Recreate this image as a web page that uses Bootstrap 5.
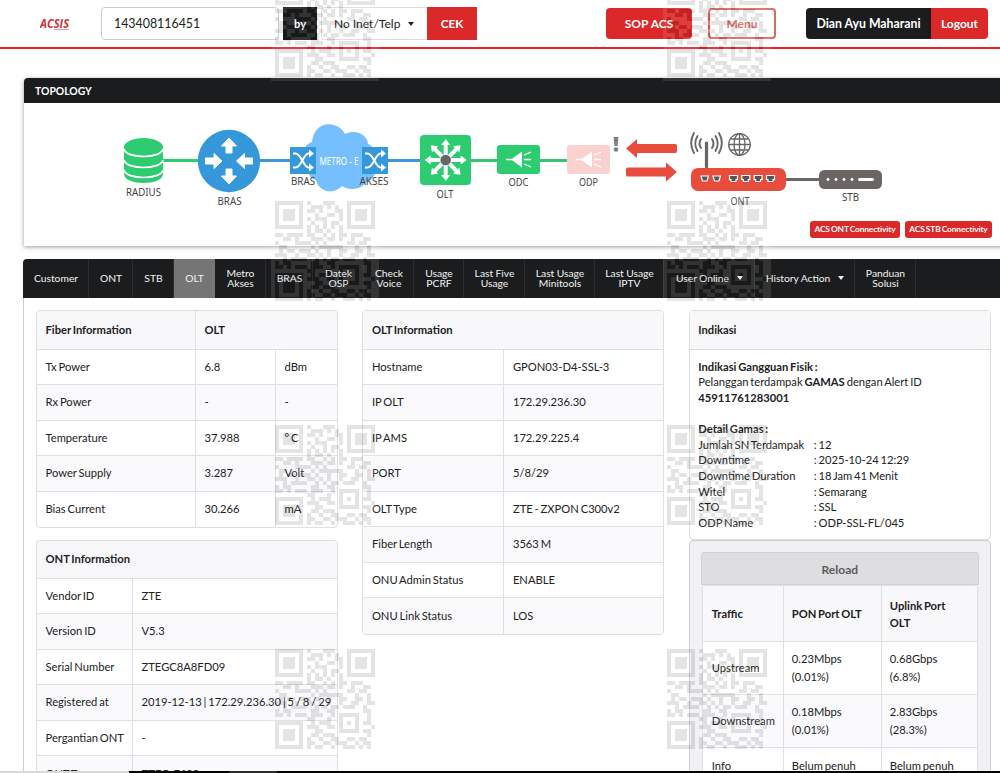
<!DOCTYPE html>
<html lang="id">
<head>
<meta charset="utf-8">
<title>ACSIS</title>
<link href="https://cdn.jsdelivr.net/npm/bootstrap@5.3.0/dist/css/bootstrap.min.css" rel="stylesheet">
<style>
:root{--red:#db2828;--ink:#1b1c1d;--line:#dededf}
body{font-family:Lato,sans-serif;font-size:11.2px;line-height:16px;color:#212121;background:#fefeff;height:773px;overflow:hidden;position:relative}
.topbar{height:49px;border-bottom:2px solid #e3242b;padding:7px 12px 0 40px;background:#fff}
.logo-box{width:61px;flex:none}
.logo-box svg{display:block}
.search-box{width:178px;height:33px;font-size:12.4px;border:1px solid #ccc;border-radius:4px;padding:0 12px;color:#222;box-shadow:none}
.by-tag{width:34px;height:33px;background:var(--ink);color:#fff;font-weight:700;margin:0 4px}
.pick{width:106px;height:33px;border:1px solid #dcdcdc;border-right:0;border-radius:4px 0 0 4px;font-size:12px;padding-left:12px}
.caret{display:inline-block;border:3px solid transparent;border-top:4px solid currentColor;border-bottom:0}
.rbtn{background:var(--red);color:#fff;font-weight:700;font-size:12px;border:0;border-radius:4px;padding:0;height:31px;line-height:31px;text-align:center;display:block}
.right-btns{padding-top:1px}
.cek{width:50px;height:33px;border-radius:0;line-height:33px;font-size:11.8px}
.menu-btn{width:68px;background:#fff;color:#e06764;border:2px solid #e06764;line-height:28px;margin:0 30px 0 16px}
.user-btn{width:125px;background:var(--ink);border-radius:4px 0 0 4px;font-size:12.3px}
.topo{margin:29px 0 0 24px;height:168px;width:990px;border-radius:4px 4px 0 0;background:#fff;box-shadow:0 1px 4px rgba(0,0,0,.38)}
.topo-head{height:25px;background:var(--ink);color:#fff;font-weight:700;font-size:10.4px;line-height:26px;padding-left:11px;border-radius:4px 4px 0 0}
.topo svg{display:block}
.lbl{font-family:"Noto Sans",sans-serif;font-size:10.3px;fill:#444}
.conn{width:90px;height:17px;line-height:17px;font-size:8.4px;border-radius:3px;letter-spacing:-.14px;word-spacing:-.7px}
.conn-row{position:absolute;right:8px;top:221px;gap:5px}
.tabs{margin:13px 0 0 23px;height:39px;background:var(--ink);border-radius:4px 0 0 0;word-spacing:-.3px}
.tabs a{color:#f2f2f2;text-decoration:none;font-size:10.3px;line-height:10px;height:39px;display:flex;align-items:center;justify-content:center;text-align:center;border-right:1px solid #2d2e2f;flex:none;padding:0 0 1px 1px}
.tabs a.on{background:#757575;border-color:#757575}
.pane{margin-left:23px;border-left:1px solid #ccc;padding:12px 9px 0 12px;height:475px;gap:24.4px;background:#fff;word-spacing:-1px}
.pane>div{width:302px;flex:none}
.grid-t{width:100%;table-layout:fixed;border-collapse:separate;border-spacing:0;border:1px solid var(--line);border-radius:4px;margin:0;background:#fff;overflow:hidden}
.grid-t th,.grid-t td{height:35.5px;padding:0 8.5px;border-bottom:1px solid #e0e0e2;border-right:1px solid #e0e0e2;vertical-align:middle;white-space:nowrap}
.grid-t th{height:38.5px;background:#f8f8fa;font-weight:700}
.grid-t.ont th{height:37.5px}
.grid-t tr>:last-child{border-right:0}
.grid-t tbody tr:last-child td{border-bottom:0}
.grid-t tbody tr:nth-child(even) td{background:#fafafc}
.indi{height:230px;border:1px solid var(--line);border-radius:4px;background:#fff}
.indi-h{height:39px;border-bottom:1px solid var(--line);background:#f8f8fa;font-weight:700;padding-left:8.5px;line-height:38px}
.indi-b{padding:8.5px 8.5px;line-height:15.65px}
.indi-b span.k{display:inline-block;width:115.5px}
.load-box{height:260px;border:1px solid #cfcfd1;border-radius:4px 4px 0 0;background:#f1f1f3;padding:11px 11px 0}
.reload{width:278px;height:33px;background:#dedee0;border:1px solid #d2d2d4;border-radius:3px 3px 0 0;text-align:center;font-weight:700;font-size:12px;line-height:33px;color:#5c5c5c;padding:0;display:block}
.traffic.grid-t{width:276px;margin-left:1px}
.traffic.grid-t td{height:53px;line-height:18px;padding:0 8px}
.traffic.grid-t th{height:56px;line-height:17px;padding:0 8px;white-space:normal}
.traffic.grid-t td:first-child,.traffic.grid-t th:first-child{padding-left:9px}
.traffic.grid-t tr:last-child td{height:36px}
.stamp{position:absolute;opacity:.1;pointer-events:none}
.foot{position:absolute;left:0;right:0;bottom:0;height:2px;background:linear-gradient(90deg,#d8d8d8 129px,#000 129px 229px,#2a2a2a 229px 277px,#000 277px)}
</style>
</head>
<body>
<header class="topbar d-flex align-items-start">
  <div class="logo-box"><svg width="40" height="33"><text x="0" y="20.5" font-size="12" font-weight="700" font-style="italic" font-family="Open Sans" fill="#d33238" textLength="29" lengthAdjust="spacingAndGlyphs">ACSIS</text><path d="M14 22.5h15" stroke="#d99" stroke-width="1"/></svg></div>
  <input class="form-control search-box flex-shrink-0" value="143408116451">
  <div class="by-tag d-flex align-items-center justify-content-center">by</div>
  <div class="pick d-flex align-items-center">No Inet/Telp <i class="caret ms-2"></i></div>
  <button class="rbtn cek">CEK</button>
  <div class="ms-auto d-flex right-btns">
    <button class="rbtn" style="width:86px">SOP ACS</button>
    <button class="rbtn menu-btn">Menu</button>
    <button class="rbtn user-btn">Dian Ayu Maharani</button>
    <button class="rbtn rounded-start-0" style="width:57px">Logout</button>
  </div>
</header>

<section class="topo">
  <div class="topo-head">TOPOLOGY</div>
  <svg width="976" height="143" viewBox="24 103 976 143">
    <!-- links -->
    <g stroke-width="3" fill="none"><path d="M160 160.500h40" stroke="#2ecc71"/><path d="M258 160.500h164" stroke="#3f97d8"/><path d="M470 160.500h98" stroke="#3cc476"/><path d="M784 179.500h38" stroke="#666"/></g>
    <!-- radius -->
    <g fill="#2ecc71"><path d="M124 147v27c0 12 39 12 39 0v-27z"/><ellipse cx="143.500" cy="147" rx="19.500" ry="9"/></g>
    <g fill="none" stroke="#fff" stroke-width="1.700"><path d="M124 149c2 10 37 10 39 0M124 160c2 10 37 10 39 0M124 170c2 10 37 10 39 0"/></g>
    <!-- bras -->
    <circle cx="229" cy="161" r="31.200" fill="#3498db"/>
    <g fill="#fff" stroke="#fff" stroke-width="1" stroke-linejoin="round"><path d="M229 138l7.500 8h-4.500v7h-6v-7h-4.500z"/><path d="M229 184l7.500-8h-4.500v-7h-6v7h-4.500z"/><path d="M222 161l-8-7.500v4.500h-8.500v6h8.500v4.500z"/><path d="M236.500 161l8-7.500v4.500h8v6h-8v4.500z"/></g>
    <!-- metro cloud -->
    <path d="M308 160C302 148 306 144 312 142C314 120 338 120 345 134C357 128 368 136 368 144C380 148 380 180 367 181C362 190 349 191 342 186C333 196 318 191 316 180C309 178 305 170 308 160z" fill="#76bfff"/>
    <g id="sw"><rect x="290" y="147" width="26" height="27" fill="#3498db"/><g fill="none" stroke="#fff" stroke-width="2"><path d="M293 153.500h2.500c6 0 8 14 13 14h2M293 167.500h2.500c6 0 8-14 13-14h2"/></g><path d="M309 149.500l5 4-5 4zM309 163.500l5 4-5 4z" fill="#fff"/></g>
    <use href="#sw" x="72"/>
    <text x="319.500" y="165" font-family="Noto Sans" font-size="10.500" fill="#fff" textLength="39" lengthAdjust="spacingAndGlyphs">METRO - E</text>
    <!-- olt -->
    <rect x="420" y="135" width="51" height="50" rx="4" fill="#2ecc71"/>
    <g transform="translate(445.700 160)" fill="#fff"><g id="x4"><path id="ray" d="M-2 0V-15H-4.500L0-21L4.500-15H2V0z"/><use href="#ray" transform="rotate(90)"/><use href="#ray" transform="rotate(180)"/><use href="#ray" transform="rotate(270)"/></g><use href="#x4" transform="rotate(45)"/><circle r="5.300" fill="#666"/></g>
    <!-- odc, odp -->
    <rect x="497" y="145" width="43" height="29" rx="3" fill="#2ecc71"/><rect x="567" y="145" width="43" height="29" rx="3" fill="#f9d2cf"/>
    <g id="horn"><path d="M511 159.500l11-8v16z" fill="#fff"/><path d="M506 159.500h7M524 155l7-3M524 159.500h7M524 164l7 3" stroke="#fff" stroke-width="1.300"/></g><use href="#horn" x="70"/>
    <path d="M613.500 137h5l-1 9h-3z" fill="#777f87"/><circle cx="616" cy="149.500" r="2.300" fill="#777f87"/>
    <path d="M626 148.500l11-9.500v5h38.500q1.500 0 1.500 2v5q0 2-1.500 2H637v5z" fill="#e74c3c"/>
    <path d="M677 172l-11-9.500v5h-38.500q-1.500 0-1.500 2v5q0 2 1.500 2H666v5z" fill="#e74c3c"/>
    <!-- ont -->
    <g fill="none" stroke="#666" stroke-width="1.900" stroke-linecap="round"><path d="M706.500 143v24" stroke-width="3.200"/><path id="wv" d="M701 139c-2 3-2 6 0 9M697.500 136c-3 5-3 10 0 15M694 133c-4 7-4 13 0 20"/><use href="#wv" transform="matrix(-1 0 0 1 1413 0)"/></g>
    <g fill="none" stroke="#666" stroke-width="1.300"><circle cx="739.500" cy="144.500" r="10.800"/><ellipse cx="739.500" cy="144.500" rx="5.500" ry="10.800"/><path d="M739.500 134v21M729 144.500h21M731 139h17M731 150h17"/></g>
    <rect x="691" y="168" width="95" height="23" rx="7" fill="#e74c3c"/>
    <g fill="#555" stroke="#fff" stroke-width="1.200"><path id="sp" d="M701 176h7.500l-1.500 5h-4.500z"/><use href="#sp" x="12"/><path id="lp" d="M729.500 175.500h8v4h-1.500v2h-5v-2h-1.500z"/><use href="#lp" x="12.300"/><use href="#lp" x="24.600"/><use href="#lp" x="37"/></g>
    <!-- stb -->
    <rect x="819" y="170" width="63" height="19" rx="5.500" fill="#6b6664"/><g fill="#fff"><circle cx="828" cy="179.500" r="1.400"/><circle cx="836" cy="179.500" r="1.400"/><circle cx="844" cy="179.500" r="1.400"/><circle cx="852" cy="179.500" r="1.400"/><rect x="858" y="178" width="16" height="3" rx="1.500"/></g>
    <g class="lbl" text-anchor="middle"><text x="143.500" y="195.500" textLength="35" lengthAdjust="spacingAndGlyphs">RADIUS</text><text x="229.500" y="204.500" textLength="24" lengthAdjust="spacingAndGlyphs">BRAS</text><text x="303" y="184.800" textLength="24" lengthAdjust="spacingAndGlyphs">BRAS</text><text x="374" y="184.800" textLength="29" lengthAdjust="spacingAndGlyphs">AKSES</text><text x="445" y="197.700" textLength="17" lengthAdjust="spacingAndGlyphs">OLT</text><text x="518.500" y="185.700" textLength="20" lengthAdjust="spacingAndGlyphs">ODC</text><text x="588.500" y="185.700" textLength="19" lengthAdjust="spacingAndGlyphs">ODP</text><text x="740" y="204.500" textLength="19" lengthAdjust="spacingAndGlyphs">ONT</text><text x="850.500" y="200.700" textLength="17" lengthAdjust="spacingAndGlyphs">STB</text></g>
  </svg>
  <div class="conn-row d-flex"><button class="rbtn conn">ACS ONT Connectivity</button><button class="rbtn conn" style="width:87px">ACS STB Connectivity</button></div>
</section>

<nav class="tabs d-flex">
  <a href="#" style="width:66px">Customer</a><a href="#" style="width:44px">ONT</a><a href="#" style="width:41px">STB</a><a href="#" class="on" style="width:41px">OLT</a><a href="#" style="width:51px">Metro<br>Akses</a><a href="#" style="width:47px">BRAS</a><a href="#" style="width:51px">Datek<br>OSP</a><a href="#" style="width:50px">Check<br>Voice</a><a href="#" style="width:50px">Usage<br>PCRF</a><a href="#" style="width:61px">Last Five<br>Usage</a><a href="#" style="width:70px">Last Usage<br>Minitools</a><a href="#" style="width:69px">Last Usage<br>IPTV</a><a href="#" style="width:91px">User Online <i class="caret ms-2"></i></a><a href="#" style="width:100px">History Action <i class="caret ms-2"></i></a><a href="#" style="width:61px">Panduan<br>Solusi</a>
</nav>

<main class="pane d-flex">
  <div>
    <table class="grid-t" style="margin-bottom:12px">
      <colgroup><col style="width:159px"><col style="width:80px"><col></colgroup>
      <thead><tr><th>Fiber Information</th><th colspan="2">OLT</th></tr></thead>
      <tbody>
        <tr><td>Tx Power</td><td>6.8</td><td>dBm</td></tr>
        <tr><td>Rx Power</td><td>-</td><td>-</td></tr>
        <tr><td>Temperature</td><td>37.988</td><td>° C</td></tr>
        <tr><td>Power Supply</td><td>3.287</td><td>Volt</td></tr>
        <tr><td>Bias Current</td><td>30.266</td><td>mA</td></tr>
      </tbody>
    </table>
    <table class="grid-t ont">
      <colgroup><col style="width:96px"><col></colgroup>
      <thead><tr><th colspan="2">ONT Information</th></tr></thead>
      <tbody>
        <tr><td>Vendor ID</td><td>ZTE</td></tr>
        <tr><td>Version ID</td><td>V5.3</td></tr>
        <tr><td>Serial Number</td><td>ZTEGC8A8FD09</td></tr>
        <tr><td>Registered at</td><td>2019-12-13 | 172.29.236.30 | 5 / 8 / 29</td></tr>
        <tr><td>Pergantian ONT</td><td>-</td></tr>
        <tr><td>ONT Type</td><td><b>ZTEG-F609</b></td></tr>
      </tbody>
    </table>
  </div>
  <div>
    <table class="grid-t">
      <colgroup><col style="width:141px"><col></colgroup>
      <thead><tr><th colspan="2">OLT Information</th></tr></thead>
      <tbody>
        <tr><td>Hostname</td><td>GPON03-D4-SSL-3</td></tr>
        <tr><td>IP OLT</td><td>172.29.236.30</td></tr>
        <tr><td>IP AMS</td><td>172.29.225.4</td></tr>
        <tr><td>PORT</td><td>5/8/29</td></tr>
        <tr><td>OLT Type</td><td>ZTE - ZXPON C300v2</td></tr>
        <tr><td>Fiber Length</td><td>3563 M</td></tr>
        <tr><td>ONU Admin Status</td><td>ENABLE</td></tr>
        <tr><td>ONU Link Status</td><td>LOS</td></tr>
      </tbody>
    </table>
  </div>
  <div>
    <div class="indi">
      <div class="indi-h">Indikasi</div>
      <div class="indi-b"><b>Indikasi Gangguan Fisik :</b><br>Pelanggan terdampak <b>GAMAS</b> dengan Alert ID<br><b>45911761283001</b><br><br><b>Detail Gamas :</b><br>
        <span class="k">Jumlah SN Terdampak</span>: 12<br><span class="k">Downtime</span>: 2025-10-24 12:29<br><span class="k">Downtime Duration</span>: 18 Jam 41 Menit<br><span class="k">Witel</span>: Semarang<br><span class="k">STO</span>: SSL<br><span class="k">ODP Name</span>: ODP-SSL-FL/045</div>
    </div>
    <div class="load-box">
      <button class="reload">Reload</button>
      <table class="grid-t traffic">
        <colgroup><col style="width:81px"><col style="width:98px"><col></colgroup>
        <thead><tr><th>Traffic</th><th>PON Port OLT</th><th>Uplink Port<br>OLT</th></tr></thead>
        <tbody>
          <tr><td>Upstream</td><td>0.23Mbps<br>(0.01%)</td><td>0.68Gbps<br>(6.8%)</td></tr>
          <tr><td>Downstream</td><td>0.18Mbps<br>(0.01%)</td><td>2.83Gbps<br>(28.3%)</td></tr>
          <tr><td>Info</td><td>Belum penuh</td><td>Belum penuh</td></tr>
        </tbody>
      </table>
    </div>
  </div>
</main>
<div id="stamps"></div>
<div class="foot"></div>
<script src="https://cdn.jsdelivr.net/npm/bootstrap@5.3.0/dist/js/bootstrap.bundle.min.js"></script>
<script>
// QR watermark, tiled over the whole page
const rows=[
"1111111010001110001111111","1000001001110101001000001","1011101011010001101011101","1011101000100110101011101","1011101010111000101011101","1000001001001011001000001","1111111010101010101111111","0000000010110100100000000",
"1101111011001010110111000","0011010001110110100100110","1000011110101000001101100","0110000001011111100010010","0101101110100100110011010","1110010011010100100110011","0010111100101011011100100","1011000001100110001010110","1101011101110010000000010",
"0000000011000101100011010","1111111001011100101010110","1000001011100110100010001","1011101000110001111110110","1011101001101110010101010","1011101010010011001101100","1000001011001101110010110","1111111010110010011101010"];
const m=rows.map(r=>[...r].map(Number));
// alignment mark: 5x5 ring with a centre dot, light border around it
for(let y=15;y<22;y++)for(let x=15;x<22;x++){const k=Math.max(Math.abs(x-18),Math.abs(y-18));m[y][x]=(k===2||k===0)?1:0}
let d='';m.forEach((r,y)=>r.forEach((c,x)=>{if(c)d+=`M${x*4+4} ${y*4+4}h4v4h-4z`}));
let out='';for(const x of [271,663])for(const y of [-27,197,421,645])out+=`<svg class="stamp" style="left:${x}px;top:${y}px" width="108" height="108" shape-rendering="crispEdges"><rect width="108" height="108" fill="#fff"/><path d="${d}"/></svg>`;
document.getElementById('stamps').innerHTML=out;
</script>
</body>
</html>
